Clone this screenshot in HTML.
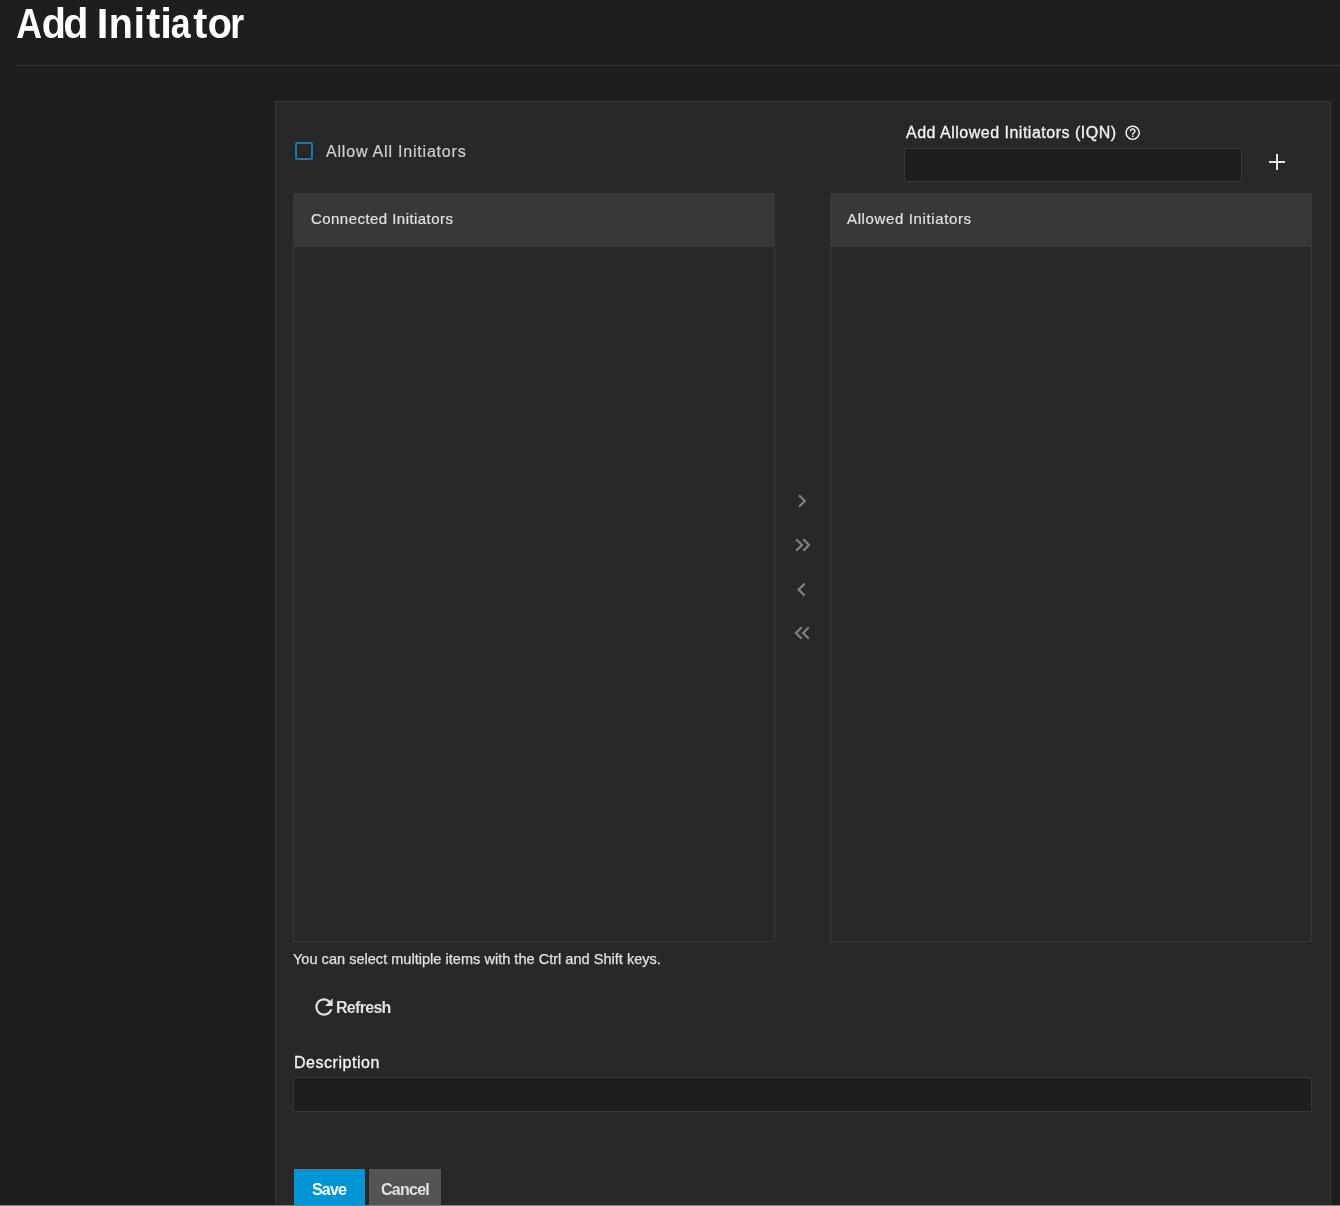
<!DOCTYPE html>
<html><head><meta charset="utf-8">
<style>
html,body{margin:0;padding:0;}
body{width:1340px;height:1206px;overflow:hidden;background:#1e1e1e;position:relative;font-family:"Liberation Sans",sans-serif;}
.a{position:absolute;}
.t{position:absolute;white-space:nowrap;line-height:1;will-change:transform;}
#title{left:0;top:3px;width:300px;height:50px;font-size:42px;font-weight:bold;color:#fff;}
#title span{position:absolute;top:0;}
#rule{left:17px;top:65px;width:1323px;height:1px;background:#383838;}
#card{left:275px;top:101px;width:1054px;height:1104px;background:#282828;border:1px solid #383838;border-bottom:none;}
#cb{left:295px;top:142px;width:14px;height:14px;border:2px solid #087fb2;border-radius:2px;}
#allow{left:326px;top:144px;font-size:16px;color:#cfcfcf;letter-spacing:0.8px;-webkit-text-stroke:0.2px #cfcfcf;}
#iqnlabel{left:905.5px;top:125px;font-size:16px;color:#f5f5f5;letter-spacing:0.5px;-webkit-text-stroke:0.3px #f5f5f5;}
#iqn{left:904px;top:148px;width:336px;height:32px;background:#1e1e1e;border:1px solid #383838;border-radius:2px;}
.hdr{top:193px;width:482px;height:54px;background:#383838;}
.body{top:247px;width:480px;height:694px;border:1px solid #383838;border-top:none;background:#282828;}
.htxt{top:211px;font-size:15px;color:#e1e1e1;letter-spacing:0.45px;-webkit-text-stroke:0.2px #e1e1e1;}
#hint{left:292.5px;top:952px;font-size:14.5px;color:#e1e1e1;letter-spacing:0.03px;-webkit-text-stroke:0.25px #e1e1e1;}
#refresh{left:336.2px;top:1000px;font-size:16px;font-weight:bold;color:#e1e1e1;letter-spacing:-0.7px;}
#desc{left:294.3px;top:1055px;font-size:16px;color:#f5f5f5;letter-spacing:0.53px;-webkit-text-stroke:0.3px #f5f5f5;}
#descin{left:293px;top:1077px;width:1017px;height:33px;background:#1e1e1e;border:1px solid #383838;border-radius:2px;}
#save{left:294px;top:1169px;width:71px;height:37px;background:#0095d5;}
#cancel{left:369px;top:1169px;width:72px;height:37px;background:#545454;}
.btxt{top:1182px;font-size:16px;font-weight:bold;}
#bottom{left:0;top:1205px;width:1340px;height:1px;background:#808080;}
svg{position:absolute;overflow:visible;}
</style></head>
<body>
<div class="t" id="title"><span style="left:13.8px;transform:scaleX(0.850);transform-origin:15.0px 0">A</span><span style="left:40.5px;transform:scaleX(0.941);transform-origin:11.5px 0">d</span><span style="left:63.4px;transform:scaleX(0.982);transform-origin:11.5px 0">d</span><span style="left:96.8px">I</span><span style="left:107.7px;transform:scaleX(0.941);transform-origin:12.5px 0">n</span><span style="left:133.5px">i</span><span style="left:146.3px">t</span><span style="left:160.3px">i</span><span style="left:168.6px;transform:scaleX(0.850);transform-origin:12.0px 0">a</span><span style="left:193.3px">t</span><span style="left:207.1px;transform:scaleX(0.939);transform-origin:12.0px 0">o</span><span style="left:228.9px;transform:scaleX(0.850);transform-origin:8.5px 0">r</span></div>
<div class="a" id="rule"></div>
<div class="a" id="card"></div>

<div class="a" id="cb"></div>
<div class="t" id="allow">Allow All Initiators</div>

<div class="t" id="iqnlabel">Add Allowed Initiators (IQN)</div>
<svg style="left:1124.2px;top:123.7px" width="17.4" height="17.4" viewBox="0 0 24 24"><path fill="#f5f5f5" d="M11 18h2v-2h-2v2zm1-16C6.480 2 2 6.48 2 12s4.48 10 10 10 10-4.48 10-10S17.52 2 12 2zm0 18c-4.41 0-8-3.59-8-8s3.590-8 8-8 8 3.59 8 8-3.59 8-8 8zm0-14c-2.21 0-4 1.79-4 4h2c0-1.1.9-2 2-2s2 .9 2 2c0 2-3 1.75-3 5h2c0-2.25 3-2.5 3-5 0-2.21-1.79-4-4-4z"/></svg>
<div class="a" id="iqn"></div>
<svg style="left:1269px;top:154px" width="16" height="16" viewBox="0 0 16 16"><path d="M8 0v16M0 8h16" stroke="#e4e4e4" stroke-width="2"/></svg>

<div class="a hdr" style="left:293px"></div>
<div class="a body" style="left:293px"></div>
<div class="t htxt" style="left:311px">Connected Initiators</div>
<div class="a hdr" style="left:830px"></div>
<div class="a body" style="left:830px"></div>
<div class="t htxt" style="left:847px;letter-spacing:0.63px">Allowed Initiators</div>

<svg style="left:789px;top:488px" width="26" height="26" viewBox="0 0 24 24"><path fill="#808080" d="M10 6L8.59 7.41 13.17 12l-4.58 4.59L10 18l6-6z"/></svg>
<svg style="left:789.7px;top:532px" width="26" height="26" viewBox="0 0 24 24"><path fill="#808080" d="M6.41 6L5 7.41 9.58 12 5 16.59 6.41 18l6-6zM13 6l-1.41 1.41L16.17 12l-4.58 4.59L13 18l6-6z"/></svg>
<svg style="left:788.3px;top:575.8px" width="27.3" height="27.3" viewBox="0 0 24 24"><path fill="#808080" d="M15.41 7.41L14 6l-6 6 6 6 1.41-1.41L10.83 12z"/></svg>
<svg style="left:789px;top:620px" width="26" height="26" viewBox="0 0 24 24"><path fill="#808080" d="M17.59 18L19 16.59 14.42 12 19 7.41 17.59 6l-6 6zM11 18l1.41-1.41L7.83 12l4.58-4.59L11 6l-6 6z"/></svg>

<div class="t" id="hint">You can select multiple items with the Ctrl and Shift keys.</div>

<svg style="left:311px;top:994.3px" width="26" height="26" viewBox="0 0 24 24"><path fill="#e1e1e1" d="M17.65 6.35C16.2 4.9 14.21 4 12 4c-4.42 0-7.99 3.58-7.99 8s3.57 8 7.99 8c3.73 0 6.84-2.55 7.73-6h-2.08c-.82 2.33-3.04 4-5.65 4-3.31 0-6-2.690-6-6s2.69-6 6-6c1.66 0 3.14.69 4.22 1.78L13 11h7V4l-2.35 2.35z"/></svg>
<div class="t" id="refresh">Refresh</div>

<div class="t" id="desc">Description</div>
<div class="a" id="descin"></div>

<div class="a" id="save"></div>
<div class="t btxt" style="left:312px;color:#fff;letter-spacing:-0.8px">Save</div>
<div class="a" id="cancel"></div>
<div class="t btxt" style="left:381px;color:#e1e1e1;letter-spacing:-0.75px">Cancel</div>

<div class="a" id="bottom"></div>
</body></html>
